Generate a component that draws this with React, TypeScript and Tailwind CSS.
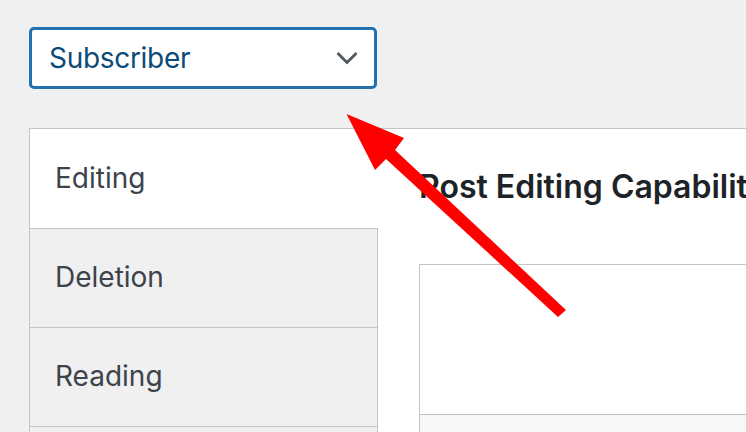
const tabs = ["Editing", "Deletion", "Reading", ""];

export default function App() {
  return (
    <div
      className="relative w-[746px] h-[432px] overflow-hidden bg-[#f0f0f0] pl-[29px] pt-[27px]"
      style={{ fontFamily: "Inter, 'Noto Sans', sans-serif" }}
    >
      {/* Role select */}
      <div className="flex items-center justify-between w-[348px] h-[62px] rounded-[5px] border-[3px] border-[#2271b1] bg-white pl-[17px] pr-[16px]">
        <span className="text-[28px] text-[#0a4b78] tracking-[-0.3px]">Subscriber</span>
        <svg width="22" height="14" viewBox="0 0 22 14" fill="none">
          <polyline
            points="1.5,2 11,11.5 20.5,2"
            stroke="#50575e"
            strokeWidth="2.8"
            strokeLinecap="butt"
            strokeLinejoin="miter"
          />
        </svg>
      </div>

      {/* Capabilities panel */}
      <div className="mt-[39px] flex w-[1000px] h-[400px] border border-[#c3c4c7] bg-white">
        <div className="flex flex-col w-[348px] shrink-0">
          {tabs.map((t, i) => (
            <div
              key={i}
              className={
                i === 0
                  ? "h-[99px] shrink-0 flex items-center pl-[25px] bg-white"
                  : "h-[99px] shrink-0 flex items-center pl-[25px] bg-[#f0f0f0] border-t border-r border-[#c3c4c7]"
              }
            >
              <span className="text-[28px] text-[#3c434a] leading-[1.4]">{t}</span>
            </div>
          ))}
        </div>
        <div className="flex-1 pl-[41px] pt-[37px]">
          <h2 className="text-[32px] font-semibold text-[#1d2327] leading-[1.3] whitespace-nowrap">
            Post Editing Capabilities
          </h2>
          <div className="mt-[56px] border border-[#c3c4c7] bg-[#f6f7f7]">
            <div className="h-[150px] bg-white border-b border-[#c3c4c7]" />
            <div className="h-[60px]" />
          </div>
        </div>
      </div>

      {/* Annotation arrow */}
      <svg className="absolute inset-0 pointer-events-none" width="746" height="432" viewBox="0 0 746 432">
        <polygon
          points="346.5,114 404,138 395,150 566,310 558,317 386,159 375,170"
          fill="#ff0000"
        />
      </svg>
    </div>
  );
}
